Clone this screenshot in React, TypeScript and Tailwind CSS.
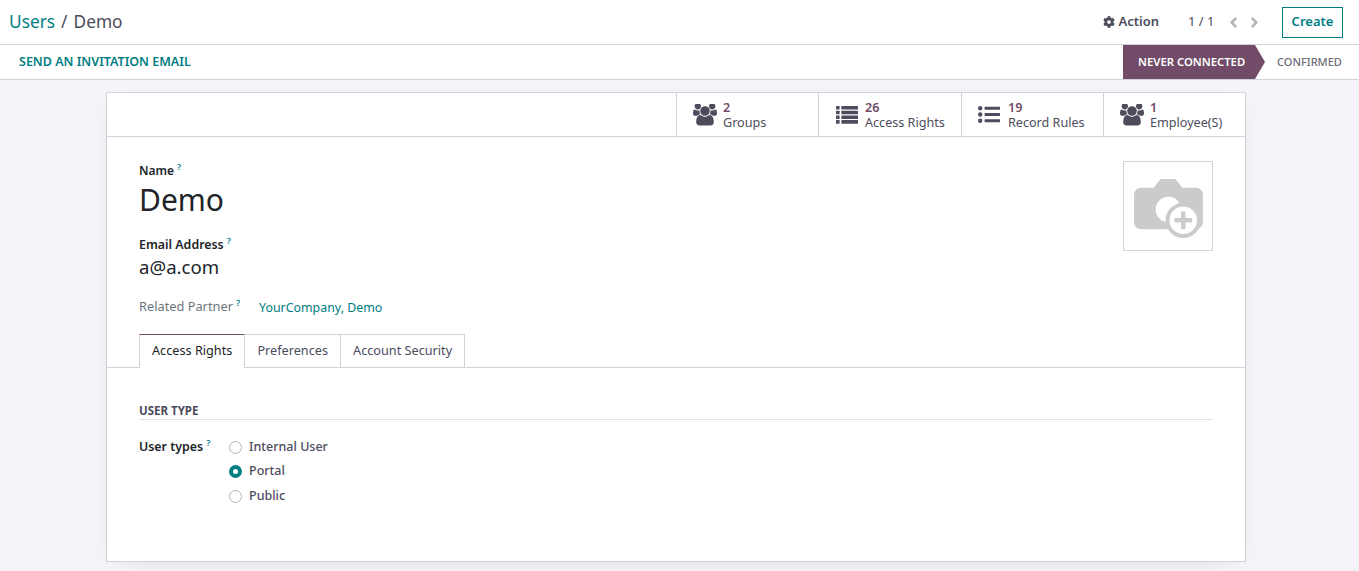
import { ReactNode } from "react";
import { FaAngleLeft, FaAngleRight, FaCog } from "react-icons/fa";

const Help = () => <sup className="ml-[3px] text-[9px] font-semibold leading-none text-[#017e84]">?</sup>;

const UsersIcon = () => (
  <svg viewBox="0 128 1920 1664" className="h-[22px] w-[24px]" fill="currentColor">
    <path d="M593 896q-162 5-265 128h-134q-82 0-138-40.5t-56-118.5q0-353 124-353 6 0 43.5 21t97.5 42.5 119 21.5q67 0 133-23-5 37-5 66 0 139 81 256zm1071 637q0 120-73 189.5t-194 69.5h-874q-121 0-194-69.5t-73-189.5q0-53 3.5-103.5t14-109 26.5-108.5 43-97.5 62-81 85.5-53.5 111.5-20q10 0 43 21.5t73 48 107 48 135 21.5 135-21.5 107-48 73-48 43-21.5q61 0 111.5 20t85.5 53.5 62 81 43 97.5 26.5 108.5 14 109 3.5 103.5zm-1024-1277q0 106-75 181t-181 75-181-75-75-181 75-181 181-75 181 75 75 181zm704 384q0 159-112.5 271.5t-271.5 112.5-271.5-112.5-112.5-271.5 112.5-271.5 271.5-112.5 271.5 112.5 112.5 271.5zm576 225q0 78-56 118.5t-138 40.5h-134q-103-123-265-128 81-117 81-256 0-29-5-66 66 23 133 23 59 0 119-21.5t97.5-42.5 43.5-21q124 0 124 353zm-128-609q0 106-75 181t-181 75-181-75-75-181 75-181 181-75 181 75 75 181z" />
  </svg>
);

const ListIcon = () => (
  <svg viewBox="0 0 22 18" className="ml-[1px] h-[18px] w-[22px]" fill="currentColor">
    {[0, 4.7, 9.4, 14.1].map((y) => (
      <g key={y}>
        <rect x="0" y={y} width="3.6" height="3.6" rx="0.5" />
        <rect x="5.4" y={y} width="16.6" height="3.6" rx="0.5" />
      </g>
    ))}
  </svg>
);

const ListUlIcon = () => (
  <svg viewBox="0 0 22 17" className="h-[17px] w-[22px]" fill="currentColor">
    {[2.2, 8.5, 14.8].map((y) => (
      <g key={y}>
        <circle cx="2.2" cy={y} r="2.2" />
        <rect x="6.6" y={y - 1.5} width="15.4" height="3" rx="0.5" />
      </g>
    ))}
  </svg>
);

const StatButton = ({ icon, value, label, width }: { icon: ReactNode; value: string; label: string; width: string }) => (
  <div className={`flex h-full items-center border-l border-[#ced4da] pl-[16px] ${width}`}>
    <div className="flex w-[30px] shrink-0 justify-start text-[#4c4c5c]">{icon}</div>
    <div className="text-[12.6px] leading-[15px]">
      <div className="font-semibold text-[#714b67]">{value}</div>
      <div className="text-[#4c4c5c]">{label}</div>
    </div>
  </div>
);

const Radio = ({ label, checked }: { label: string; checked?: boolean }) => (
  <div className="flex h-[24.5px] items-center">
    {checked ? (
      <span className="mr-[7px] h-[13px] w-[13px] rounded-full border-[4px] border-[#017e84] bg-white" />
    ) : (
      <span className="mr-[7px] h-[13px] w-[13px] rounded-full border border-[#adb5bd] bg-white" />
    )}
    <span className="text-[12.5px] font-medium text-[#4c4c5c]">{label}</span>
  </div>
);

const Tab = ({ label, active }: { label: string; active?: boolean }) => (
  <div
    className={
      active
        ? "-mb-px flex h-[34px] items-center border border-b-0 border-[#ced4da] border-t-[#714b67] bg-white px-[12px] pb-[1px] text-[12.7px] text-[#212529]"
        : "-ml-px flex h-[33px] items-center border border-b-0 border-[#ced4da] px-[12px] text-[12.7px] text-[#4c4c5c]"
    }
  >
    {label}
  </div>
);

export default function App() {
  return (
    <div className="flex h-[571px] flex-col overflow-hidden bg-[#f3f3f8] font-['Noto_Sans',sans-serif]">
      <div className="flex h-[45px] shrink-0 items-center justify-between border-b border-[#ced4da] bg-white pl-[9px] pr-[16px]">
        <div className="text-[17.3px] text-[#4c4c5c]">
          <span className="text-[#017e84]">Users</span>
          <span className="mx-[6px]">/</span>
          <span>Demo</span>
        </div>
        <div className="flex items-center text-[13px] text-[#4c4c5c]">
          <FaCog className="mr-[3px] text-[12px]" />
          <span className="font-semibold">Action</span>
          <span className="ml-[29px]">1 / 1</span>
          <FaAngleLeft className="ml-[10px] text-[17px] text-[#b5b5bb]" />
          <FaAngleRight className="ml-[4.5px] text-[17px] text-[#b5b5bb]" />
          <div className="ml-[19px] flex h-[31px] w-[61px] items-center justify-center border border-[#017e84] text-[13px] font-semibold text-[#017e84]">
            Create
          </div>
        </div>
      </div>

      <div className="flex h-[35px] shrink-0 items-center justify-between border-b border-[#ced4da] bg-white">
        <div className="pl-[19px] text-[12.5px] font-semibold text-[#017e84]">SEND AN INVITATION EMAIL</div>
        <div className="flex h-full items-center">
          <div className="flex h-[34px] w-[142px] items-center bg-[#714b67] pl-[15px] text-[11.3px] font-semibold text-white [clip-path:polygon(0_0,132px_0,100%_50%,132px_100%,0_100%)]">
            NEVER CONNECTED
          </div>
          <div className="w-[94px] pl-[12px] text-[11px] font-medium text-[#6b6d78]">CONFIRMED</div>
        </div>
      </div>

      <div className="ml-[106px] mt-[12px] h-[470px] w-[1140px] shrink-0 border border-[#ced4da] bg-white shadow-[0_5px_20px_-15px_rgba(0,0,0,0.3)]">
        <div className="flex h-[44px] justify-end border-b border-[#ced4da]">
          <StatButton icon={<UsersIcon />} value="2" label="Groups" width="w-[142px]" />
          <StatButton icon={<ListIcon />} value="26" label="Access Rights" width="w-[143px]" />
          <StatButton icon={<ListUlIcon />} value="19" label="Record Rules" width="w-[142px]" />
          <StatButton icon={<UsersIcon />} value="1" label="Employee(S)" width="w-[142px]" />
        </div>

        <div className="flex justify-between px-[32px] pt-[24px]">
          <div>
            <div className="flex h-[20px] items-center text-[12px] font-semibold text-[#212529]">
              Name
              <Help />
            </div>
            <div className="-mt-[1px] h-[40px] text-[30px] leading-[40px] text-[#212529]">Demo</div>
            <div className="mt-[15px] flex h-[20px] items-center text-[12.4px] font-semibold text-[#212529]">
              Email Address
              <Help />
            </div>
            <div className="h-[28px] text-[18.6px] leading-[23px] text-[#212529]">a@a.com</div>
            <div className="mt-[15px] flex h-[20px] items-center text-[12.4px] text-[#212529]">
              <div className="mb-[2px] flex w-[120px] items-center text-[12.8px] text-[#6c757d]">
                Related Partner
                <Help />
              </div>
              <span className="text-[#017e84]">YourCompany, Demo</span>
            </div>
          </div>
          <div className="flex h-[90px] w-[90px] items-start justify-start border border-[#ced4da] pl-[10px] pt-[16px]">
            <svg viewBox="0 0 70 62" className="h-[61px] w-[69px]">
              <path
                d="M7 10h13l7-9h15l7 9h14a7 7 0 0 1 7 7v28a7 7 0 0 1-7 7H7a7 7 0 0 1-7-7V17a7 7 0 0 1 7-7z"
                fill="#cbcbcb"
              />
              <circle cx="35" cy="32" r="13" fill="#fff" />
              <circle cx="50" cy="43" r="18" fill="#cbcbcb" />
              <circle cx="50" cy="43" r="14" fill="#fff" />
              <path d="M50 34v18M41 43h18" stroke="#cbcbcb" strokeWidth="4.5" />
            </svg>
          </div>
        </div>

        <div className="mt-[16px] flex h-[34px] border-b border-[#ced4da] pl-[32px]">
          <Tab label="Access Rights" active />
          <Tab label="Preferences" />
          <Tab label="Account Security" />
        </div>

        <div className="px-[32px] pt-[35px]">
          <div className="h-[17px] border-b border-[#e2e2e8] text-[11.5px] font-bold leading-[16px] text-[#4c4c5c]">USER TYPE</div>
          <div className="mt-[15px] flex">
            <div className="flex h-[24px] w-[90px] items-center text-[12.4px] font-semibold text-[#212529]">
              User types
              <Help />
            </div>
            <div>
              <Radio label="Internal User" />
              <Radio label="Portal" checked />
              <Radio label="Public" />
            </div>
          </div>
        </div>
      </div>
    </div>
  );
}
